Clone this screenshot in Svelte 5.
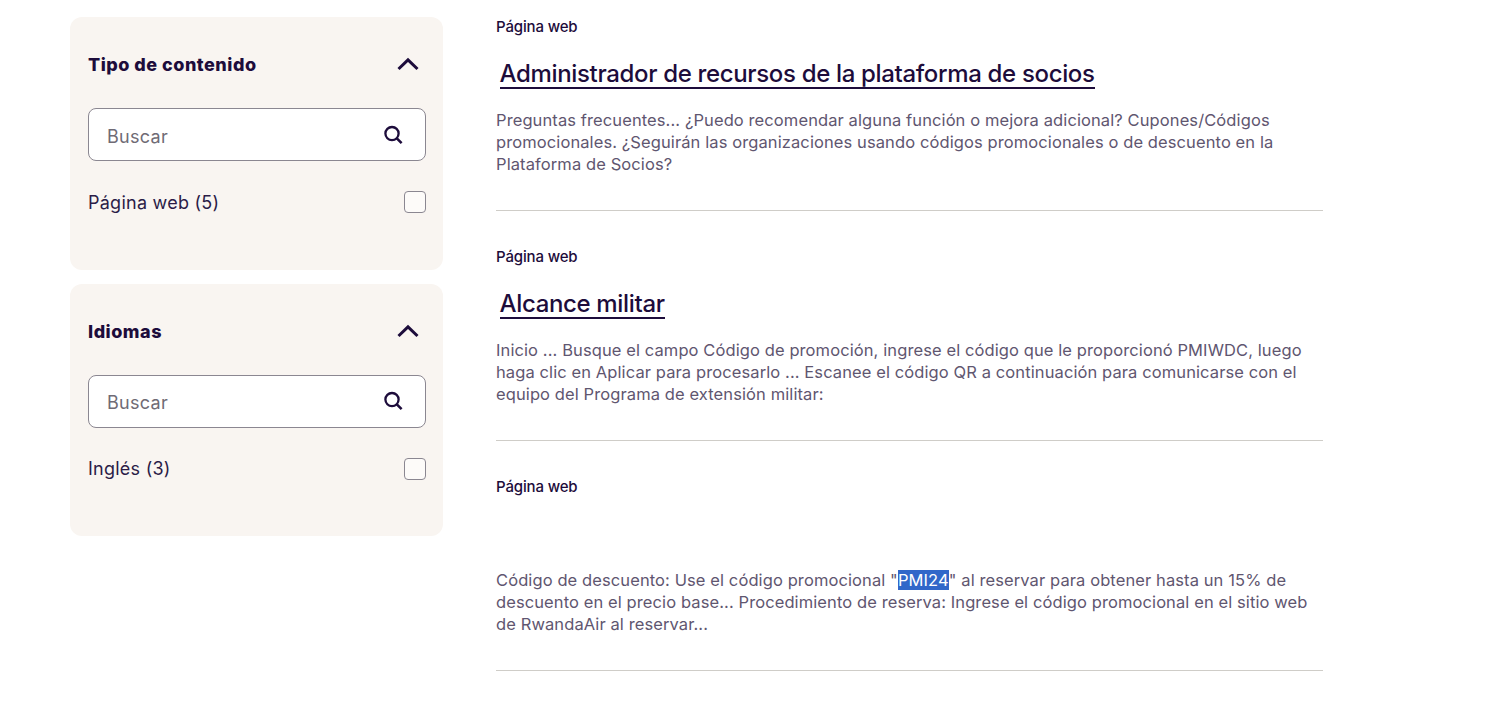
<script>
  const filters = [
    { title: "Tipo de contenido", option: "Página web (5)" },
    { title: "Idiomas", option: "Inglés (3)" }
  ];
</script>

<div class="page">
  <aside>
    {#each filters as f}
      <section class="card">
        <div class="head">
          <h3>{f.title}</h3>
          <svg class="chev" width="24" height="14" viewBox="0 0 24 14"><path d="M2.5 12 12 2.8 21.5 12" fill="none" stroke="#1d0c3b" stroke-width="3"/></svg>
        </div>
        <div class="search">
          <span>Buscar</span>
          <svg width="22" height="22" viewBox="0 0 22 22"><circle cx="10" cy="9.6" r="6.6" fill="none" stroke="#1d0c3b" stroke-width="2.3"/><path d="M14.6 14.2 19.6 19.2" stroke="#1d0c3b" stroke-width="2.6"/></svg>
        </div>
        <div class="option">
          <span>{f.option}</span>
          <i class="box"></i>
        </div>
      </section>
    {/each}
  </aside>

  <main>
    <article>
      <div class="kind">Página web</div>
      <h2><a href="#a">Administrador de recursos de la plataforma de socios</a></h2>
      <p>Preguntas frecuentes... ¿Puedo recomendar alguna función o mejora adicional? Cupones/Códigos<br />promocionales. ¿Seguirán las organizaciones usando códigos promocionales o de descuento en la<br />Plataforma de Socios?</p>
    </article>
    <article>
      <div class="kind">Página web</div>
      <h2><a href="#b">Alcance militar</a></h2>
      <p>Inicio ... Busque el campo Código de promoción, ingrese el código que le proporcionó PMIWDC, luego<br />haga clic en Aplicar para procesarlo ... Escanee el código QR a continuación para comunicarse con el<br />equipo del Programa de extensión militar:</p>
    </article>
    <article>
      <div class="kind">Página web</div>
      <h2></h2>
      <p>Código de descuento: Use el código promocional "<mark>PMI24</mark>" al reservar para obtener hasta un 15% de<br />descuento en el precio base... Procedimiento de reserva: Ingrese el código promocional en el sitio web<br />de RwandaAir al reservar...</p>
    </article>
  </main>
</div>

<style>
  :global(body) {
    margin: 0;
    background: #fff;
    font-family: Inter, "Liberation Sans", sans-serif;
    color: #1d0c3b;
  }
  .page {
    display: flex;
    gap: 53px;
    padding: 17px 0 0 70px;
    height: 689px;
    overflow: hidden;
  }
  aside {
    width: 373px;
    flex: none;
    display: flex;
    flex-direction: column;
    gap: 14px;
  }
  .card {
    background: #f9f5f1;
    border-radius: 12px;
    height: 252.5px;
    box-sizing: border-box;
    padding: 34px 17px 0 18px;
  }
  .head {
    display: flex;
    justify-content: space-between;
    align-items: center;
    height: 28px;
    padding-right: 6px;
  }
  .chev {
    margin-bottom: 2px;
  }
  h3 {
    margin: 0 0 1px;
    font-size: 18px;
    font-weight: 800;
    letter-spacing: 0.5px;
  }
  .search {
    margin-top: 29px;
    height: 53px;
    box-sizing: border-box;
    border: 1px solid #8b8791;
    border-radius: 8px;
    background: #fff;
    display: flex;
    align-items: center;
    justify-content: space-between;
    padding: 0 21px 0 18px;
    font-size: 18px;
    letter-spacing: 0.3px;
    color: #6f6b75;
  }
  .search span {
    padding-top: 3px;
  }
  .option {
    margin-top: 30px;
    display: flex;
    justify-content: space-between;
    align-items: center;
    font-size: 18px;
    letter-spacing: 0.25px;
    color: #2b1c47;
  }
  .box {
    width: 22px;
    height: 22px;
    box-sizing: border-box;
    border: 1px solid #8b8791;
    border-radius: 4px;
    background: #fff9;
  }
  main {
    width: 827px;
    flex: none;
    margin-top: -17px;
  }
  article {
    height: 192px;
    margin-bottom: 19px;
    border-bottom: 1px solid #cfcdc8;
    padding-top: 18px;
  }
  .kind {
    font-size: 15px;
    line-height: 18px;
    font-weight: 500;
    letter-spacing: -0.15px;
  }
  h2 {
    margin: 0;
    height: 48px;
    padding: 25px 0 0 3.5px;
    font-size: 24px;
    line-height: 26px;
    font-weight: 450;
  }
  h2 a {
    display: inline-block;
    color: #1d0c3b;
    text-decoration: none;
    border-bottom: 2px solid #1d0c3b;
    letter-spacing: -0.34px;
  }
  p {
    margin: 0;
    font-size: 16.5px;
    line-height: 22px;
    letter-spacing: 0.1px;
    color: #5f5670;
  }
  mark {
    background: #3167c9;
    color: #fff;
  }
</style>
